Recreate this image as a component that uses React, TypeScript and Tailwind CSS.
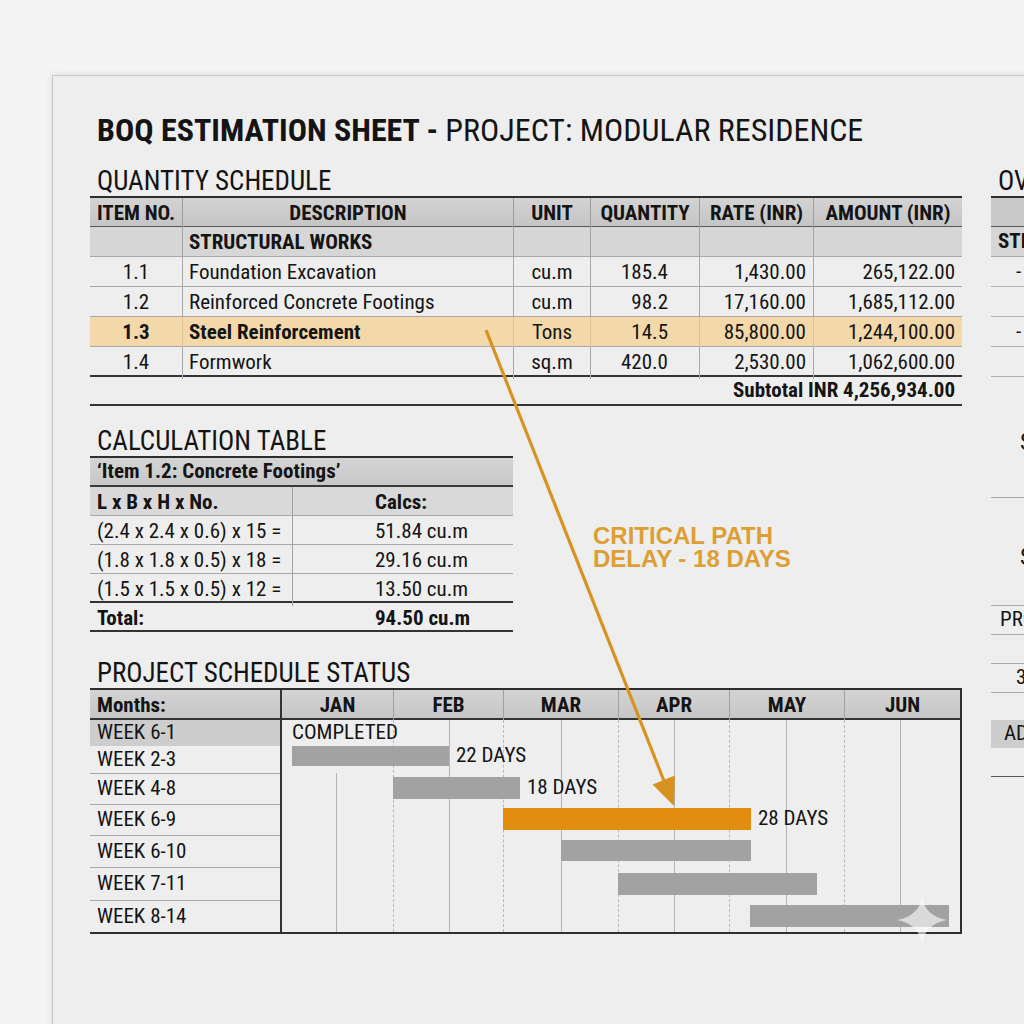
import React from 'react';

type QtyRow = {
  no: string;
  desc: string;
  unit: string;
  qty: string;
  rate: string;
  amount: string;
  hl?: boolean;
};

const qtyRows: QtyRow[] = [
  { no: '1.1', desc: 'Foundation Excavation', unit: 'cu.m', qty: '185.4', rate: '1,430.00', amount: '265,122.00' },
  { no: '1.2', desc: 'Reinforced Concrete Footings', unit: 'cu.m', qty: '98.2', rate: '17,160.00', amount: '1,685,112.00' },
  { no: '1.3', desc: 'Steel Reinforcement', unit: 'Tons', qty: '14.5', rate: '85,800.00', amount: '1,244,100.00', hl: true },
  { no: '1.4', desc: 'Formwork', unit: 'sq.m', qty: '420.0', rate: '2,530.00', amount: '1,062,600.00' },
];

const calcRows = [
  { expr: '(2.4 x 2.4 x 0.6) x 15 =', val: '51.84 cu.m' },
  { expr: '(1.8 x 1.8 x 0.5) x 18 =', val: '29.16 cu.m' },
  { expr: '(1.5 x 1.5 x 0.5) x 12 =', val: '13.50 cu.m' },
];

const months = ['JAN', 'FEB', 'MAR', 'APR', 'MAY', 'JUN'];

const weeks = [
  { label: 'WEEK 6-1', h: 26 },
  { label: 'WEEK 2-3', h: 28 },
  { label: 'WEEK 4-8', h: 31 },
  { label: 'WEEK 6-9', h: 31 },
  { label: 'WEEK 6-10', h: 32 },
  { label: 'WEEK 7-11', h: 33 },
  { label: 'WEEK 8-14', h: 31 },
];

// bar geometry relative to the chart body (left edge x=282, top y=722)
const bars = [
  { left: 10, width: 157, top: 26, h: 20, label: '22 DAYS' },
  { left: 111, width: 127, top: 57, h: 22, label: '18 DAYS' },
  { left: 221, width: 248, top: 88, h: 22, label: '28 DAYS', critical: true },
  { left: 279, width: 190, top: 120, h: 21 },
  { left: 336, width: 199, top: 153, h: 22 },
  { left: 468, width: 199, top: 185, h: 22 },
];

const dashed = [111, 221, 336, 447, 562];
const mids = [
  { x: 54, top: 53 },
  { x: 167, top: 0 },
  { x: 279, top: 0 },
  { x: 392, top: 0 },
  { x: 504, top: 0 },
  { x: 618, top: 0 },
];

const qtyCols = 'grid grid-cols-[92px_331px_77px_109px_114px_149px]';

const QuantityTable: React.FC = () => (
  <div className="w-[872px] border-t-2 border-[#2e2e2e]">
    <div className={`${qtyCols} h-[29px] border-b border-[#585858] bg-linear-to-b from-[#d3d3d3] to-[#c5c5c5] font-bold`}>
      <div className="flex items-center justify-center">ITEM NO.</div>
      <div className="flex items-center justify-center border-l border-[#9d9d9d]">DESCRIPTION</div>
      <div className="flex items-center justify-center border-l border-[#9d9d9d]">UNIT</div>
      <div className="flex items-center justify-center border-l border-[#9d9d9d]">QUANTITY</div>
      <div className="flex items-center justify-center border-l border-[#9d9d9d]">RATE (INR)</div>
      <div className="flex items-center justify-center border-l border-[#9d9d9d]">AMOUNT (INR)</div>
    </div>
    <div className={`${qtyCols} h-[30px] border-b border-[#a8a8a8] bg-[#d6d6d6] font-bold`}>
      <div />
      <div className="flex items-center pl-[6px] border-l border-[#a3a3a3]">STRUCTURAL WORKS</div>
      <div className="border-l border-[#a3a3a3]" />
      <div className="border-l border-[#a3a3a3]" />
      <div className="border-l border-[#a3a3a3]" />
      <div className="border-l border-[#a3a3a3]" />
    </div>
    {qtyRows.map((r, i) => {
      const last = i === qtyRows.length - 1;
      const line = r.hl ? 'border-[#dcc196]' : 'border-[#a8a8a8]';
      return (
        <div
          key={r.no}
          className={`${qtyCols} h-[30px] ${last ? 'border-b-2 border-[#333]' : 'border-b border-[#a8a8a8]'} ${r.hl ? 'bg-[#f3d8a9]' : ''}`}
        >
          <div className={`flex items-center justify-center ${r.hl ? 'font-bold' : ''}`}>{r.no}</div>
          <div className={`flex items-center pl-[6px] border-l ${line} ${r.hl ? 'font-bold' : ''}`}>{r.desc}</div>
          <div className={`flex items-center justify-center border-l ${line}`}>{r.unit}</div>
          <div className={`flex items-center justify-end pr-[31px] border-l ${line}`}>{r.qty}</div>
          <div className={`flex items-center justify-end pr-[7px] border-l ${line}`}>{r.rate}</div>
          <div className={`flex items-center justify-end pr-[7px] border-l ${line}`}>{r.amount}</div>
        </div>
      );
    })}
    <div className="flex h-[29px] items-center justify-end border-b-2 border-[#333] pr-[7px] font-bold">
      Subtotal INR 4,256,934.00
    </div>
  </div>
);

const CalcTable: React.FC = () => (
  <div className="w-[423px] border-t-2 border-[#2e2e2e]">
    <div className="flex h-[29px] items-center border-b-2 border-[#3a3a3a] bg-linear-to-b from-[#d4d4d4] to-[#c8c8c8] pl-[7px] font-bold">
      ‘Item 1.2: Concrete Footings’
    </div>
    <div className="grid h-[29px] grid-cols-[202px_1fr] border-b border-[#a8a8a8] bg-[#d9d9d9] font-bold">
      <div className="flex items-center pl-[7px]">L x B x H x No.</div>
      <div className="flex items-center pl-[82px] border-l border-[#a3a3a3]">Calcs:</div>
    </div>
    {calcRows.map((r, i) => (
      <div
        key={r.expr}
        className={`grid h-[29px] grid-cols-[202px_1fr] ${i === calcRows.length - 1 ? 'border-b-2 border-[#333]' : 'border-b border-[#a8a8a8]'}`}
      >
        <div className="flex items-center pl-[7px]">{r.expr}</div>
        <div className="flex items-center pl-[82px] border-l border-[#a3a3a3]">{r.val}</div>
      </div>
    ))}
    <div className="grid h-[29px] grid-cols-[202px_1fr] border-b-2 border-[#333] font-bold">
      <div className="flex items-center pl-[7px]">Total:</div>
      <div className="flex items-center pl-[83px]">94.50 cu.m</div>
    </div>
  </div>
);

const Gantt: React.FC = () => (
  <div className="w-[872px] border-y-2 border-r-2 border-[#2e2e2e]">
    <div className="grid h-[30px] grid-cols-[192px_111px_110px_115px_111px_115px_1fr] border-b-2 border-[#333] bg-linear-to-b from-[#d3d3d3] to-[#c6c6c6] font-bold">
      <div className="flex items-center pl-[7px] border-r-2 border-[#333]">Months:</div>
      {months.map((m, i) => (
        <div key={m} className={`flex items-center justify-center ${i > 0 ? 'border-l border-[#a0a0a0]' : ''}`}>
          {m}
        </div>
      ))}
    </div>
    <div className="flex">
      <div className="flex w-[192px] flex-col border-r-2 border-[#333]">
        {weeks.map((w, i) => (
          <div
            key={w.label}
            style={{ height: w.h }}
            className={`flex items-center pl-[7px] ${i === 0 ? 'bg-[#cdcdcd]' : ''} ${i > 0 && i < weeks.length - 1 ? 'border-b border-[#a8a8a8]' : ''}`}
          >
            {w.label}
          </div>
        ))}
      </div>
      <div className="relative h-[212px] flex-1">
        {dashed.map((x) => (
          <div key={x} className="absolute top-0 bottom-0 border-l border-dashed border-[#b9b9b9]" style={{ left: x }} />
        ))}
        {mids.map((m) => (
          <div key={m.x} className="absolute bottom-0 w-px bg-[#b3b3b3]" style={{ left: m.x, top: m.top }} />
        ))}
        <div className="absolute left-[10px] top-0 flex h-[25px] items-center">COMPLETED</div>
        {bars.map((b) => (
          <React.Fragment key={b.left}>
            <div
              className={`absolute ${b.critical ? 'bg-[#e08d10]' : 'bg-[#a2a2a2]'}`}
              style={{ left: b.left, width: b.width, top: b.top, height: b.h }}
            />
            {b.label && (
              <div
                className="absolute flex items-center whitespace-nowrap"
                style={{ left: b.left + b.width + 7, top: b.top, height: b.h }}
              >
                {b.label}
              </div>
            )}
          </React.Fragment>
        ))}
      </div>
    </div>
  </div>
);

const SideColumn: React.FC = () => (
  <div className="flex w-[60px] flex-col">
    <div className="h-[30px] pl-[7px] text-[27px] leading-[30px]">OVERVIEW</div>
    <div className="border-t-2 border-[#2e2e2e]">
      <div className="h-[29px] border-b border-[#585858] bg-[#c9c9c9]" />
      <div className="flex h-[30px] items-center border-b border-[#a8a8a8] bg-[#d6d6d6] pl-[7px] font-bold whitespace-nowrap">
        STRUCTURAL
      </div>
      <div className="flex h-[30px] items-center border-b border-[#b0b0b0] pl-[25px]">-</div>
      <div className="h-[30px] border-b border-[#b0b0b0]" />
      <div className="flex h-[30px] items-center border-b border-[#b0b0b0] pl-[25px]">-</div>
      <div className="h-[30px] border-b border-[#b0b0b0]" />
    </div>
    <div className="mt-[53px] h-[24px] pl-[29px] text-[24px] leading-[24px]">S</div>
    <div className="mt-[43px] border-t border-[#aaaaaa]" />
    <div className="mt-[47px] h-[24px] pl-[29px] text-[24px] leading-[24px]">S</div>
    <div className="mt-[36px] border-t border-[#aaaaaa]" />
    <div className="flex h-[29px] items-center border-b border-[#aaaaaa] pl-[9px] whitespace-nowrap">PROJECT</div>
    <div className="mt-[28px] border-t border-[#aaaaaa]" />
    <div className="flex h-[29px] items-center border-b border-[#aaaaaa] pl-[25px]">3</div>
    <div className="mt-[27px] flex h-[28px] items-center bg-[#cdcdcd] pl-[13px] whitespace-nowrap">ADDITIONAL</div>
    <div className="mt-[28px] border-t border-[#555]" />
  </div>
);

const App: React.FC = () => {
  return (
    <div className="relative h-[1024px] w-[1024px] overflow-hidden bg-[#f4f4f4] font-['Liberation_Sans_Narrow','Roboto_Condensed','DejaVu_Sans_Condensed',Roboto,sans-serif] text-[21px] text-[#141414]">
      <div className="ml-[52px] mt-[75px] h-[960px] w-[1100px] border-l border-t border-[#c7c7c7] bg-[#eeeeee] pl-[37px] pt-[34px] shadow-[0_0_8px_rgba(0,0,0,0.10)]">
        <h1 className="h-[40px] pl-[7px] text-[32px] leading-[40px] whitespace-nowrap">
          <span className="font-bold">BOQ ESTIMATION SHEET -</span> PROJECT: MODULAR RESIDENCE
        </h1>
        <div className="mt-[16px] flex gap-[29px]">
          <div className="flex w-[872px] flex-col">
            <div className="h-[30px] pl-[7px] text-[27px] leading-[30px]">QUANTITY SCHEDULE</div>
            <QuantityTable />
            <div className="mt-[20px] h-[30px] pl-[7px] text-[27px] leading-[30px]">CALCULATION TABLE</div>
            <CalcTable />
            <div className="mt-[26px] h-[30px] pl-[7px] text-[27px] leading-[30px]">PROJECT SCHEDULE STATUS</div>
            <Gantt />
          </div>
          <SideColumn />
        </div>
      </div>

      <div className="absolute left-[593px] top-[524px] font-['Liberation_Sans',Arial,sans-serif] text-[24px] font-bold leading-[23px] text-[#dd9f34]">
        <div>CRITICAL PATH</div>
        <div>DELAY - 18 DAYS</div>
      </div>

      <svg className="pointer-events-none absolute inset-0" width="1024" height="1024" viewBox="0 0 1024 1024">
        <line x1="486" y1="330" x2="664" y2="781" stroke="#d8921f" strokeWidth="3.2" />
        <polygon points="674,806 652.5,784.4 674.9,775.6" fill="#d8921f" />
        <path
          d="M922 897 Q925 916 947 920 Q925 924 922 944 Q919 924 897 920 Q919 916 922 897 Z"
          fill="#ffffff"
          opacity="0.6"
        />
      </svg>
    </div>
  );
};

export default App;
